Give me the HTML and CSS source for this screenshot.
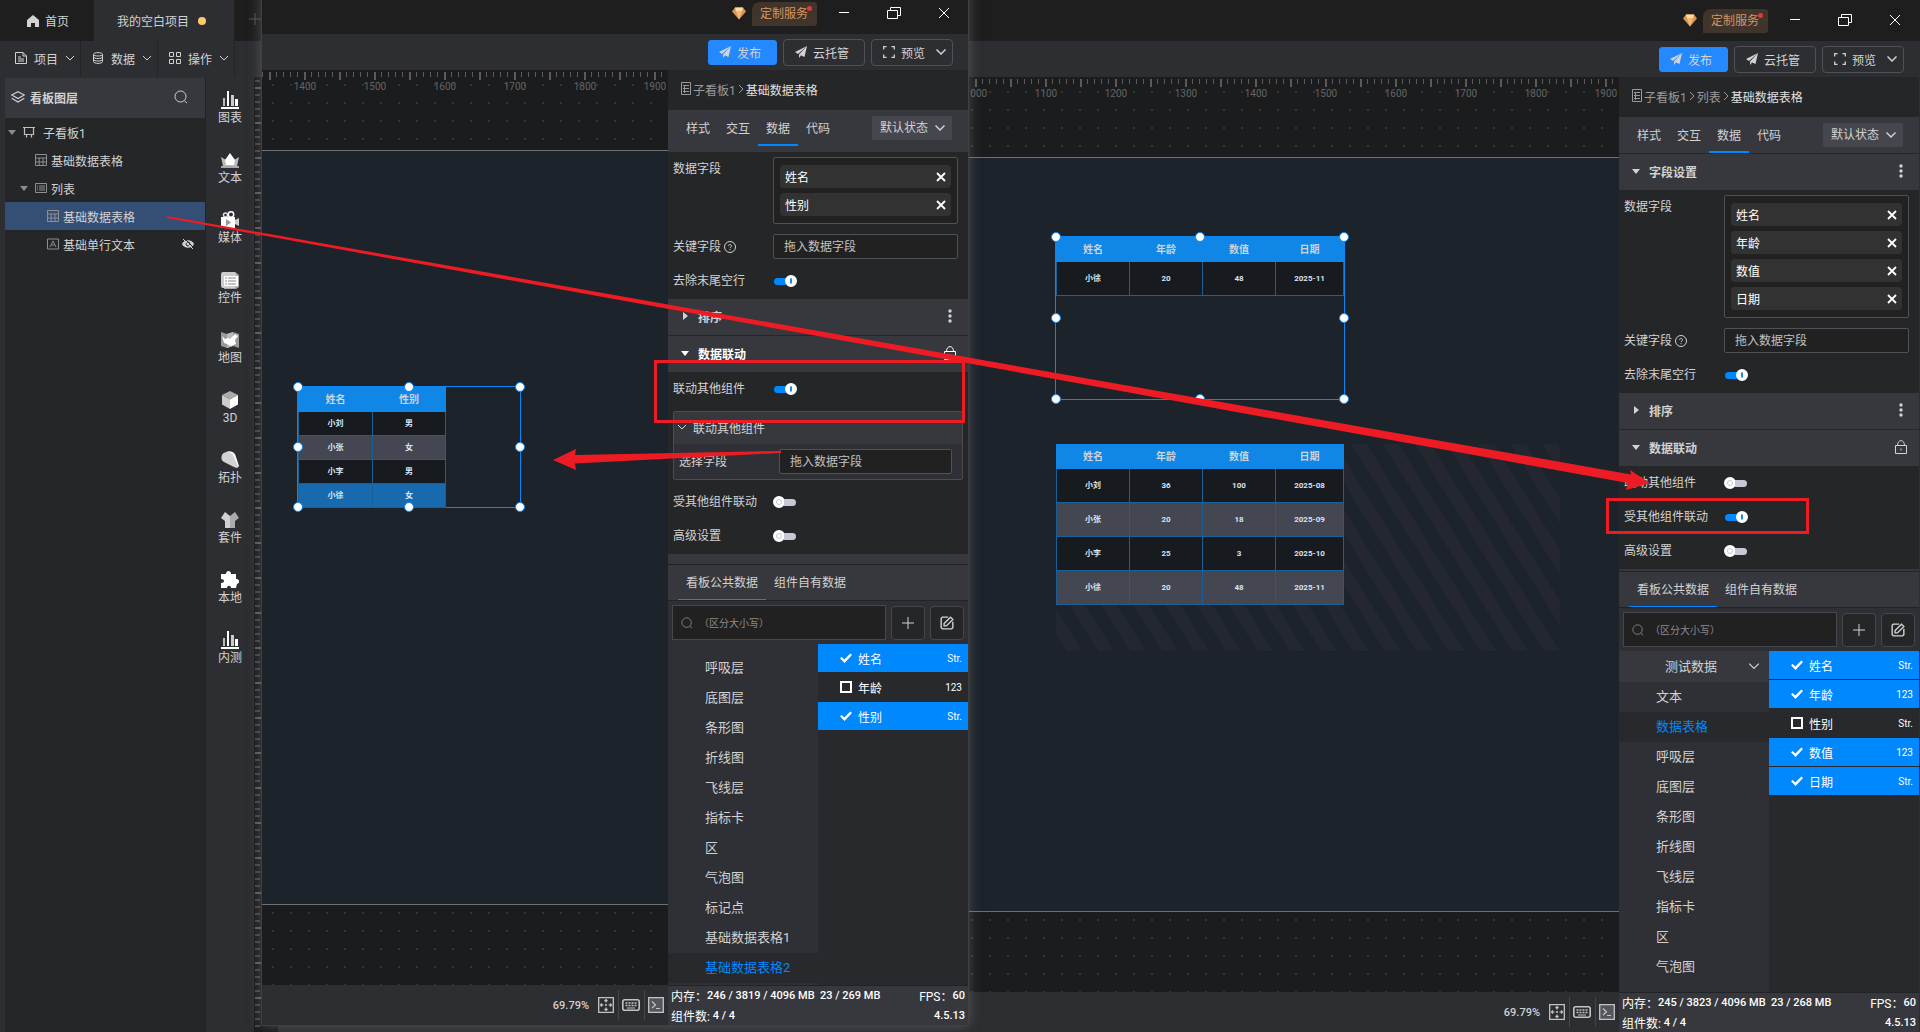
FILE: index.html
```html
<!DOCTYPE html>
<html lang="zh-CN">
<head>
  <meta charset="UTF-8" />
  <meta name="viewport" content="width=device-width, initial-scale=1.0" />
  <title>我的空白项目</title>
  <link rel="stylesheet" href="styles.css">
</head>
<body>

<!-- Iconos -->
<svg class="sprite" aria-hidden="true">
  <symbol id="i-home" viewBox="0 0 12 12"><path d="M6 0 12 5v7H8V8H4v4H0V5z" fill="currentColor"/></symbol>
  <symbol id="i-file" viewBox="0 0 12 12"><path d="M.5.5h7.500L11.500 4v7.500H.5zM8 .5V4h3.500M3 5h3M3 7h6M3 9h6" fill="none" stroke="currentColor"/></symbol>
  <symbol id="i-db" viewBox="0 0 12 12"><path d="M1.500 2.500c0-2.500 9-2.500 9 0v7c0 2.500-9 2.500-9 0zM1.500 2.500c0 2 9 2 9 0M1.500 5c0 2 9 2 9 0M1.500 7.500c0 2 9 2 9 0" fill="none" stroke="currentColor"/></symbol>
  <symbol id="i-grid" viewBox="0 0 12 12"><path d="M.5.5h4v4h-4zM7.500.5h4v4h-4zM.5 7.500h4v4h-4zM7.500 7.500h4v4h-4z" fill="none" stroke="currentColor"/></symbol>
  <symbol id="i-chev" viewBox="0 0 10 10"><path d="M1 3l4 4 4-4" fill="none" stroke="currentColor"/></symbol>
  <symbol id="i-chev2" viewBox="0 0 10 10"><path d="M.5 2.500 5 7l4.500-4.500" fill="none" stroke="currentColor" stroke-width="1.500"/></symbol>
  <symbol id="i-right" viewBox="0 0 6 10"><path d="M1 1l4 4-4 4" fill="none" stroke="currentColor"/></symbol>
  <symbol id="i-down" viewBox="0 0 8 8"><path d="M0 2h8L4 7z" fill="currentColor"/></symbol>
  <symbol id="i-next" viewBox="0 0 8 8"><path d="M2 0v8l5-4z" fill="currentColor"/></symbol>
  <symbol id="i-layers" viewBox="0 0 14 12"><path d="M7 .7 13.300 4 7 7.500.7 4zM.7 7.300 7 11l6.300-3.700" fill="none" stroke="currentColor" stroke-width="1.200"/></symbol>
  <symbol id="i-search" viewBox="0 0 14 14"><circle cx="6.500" cy="6.500" r="5.500" fill="none" stroke="currentColor"/><path d="M10.500 11l2.500 2" stroke="currentColor"/></symbol>
  <symbol id="i-board" viewBox="0 0 16 12"><path d="M0 1.500h12M1.500 1.500v7h9v-7M3.500 8.500v3M8.500 8.500v3" fill="none" stroke="currentColor" stroke-width="1.200"/></symbol>
  <symbol id="i-table" viewBox="0 0 12 12"><path d="M.5.5h11v11H.5zM.5 4h11M.5 8h11M4.200 4v7.500M8 4v7.500" fill="none" stroke="currentColor"/></symbol>
  <symbol id="i-list" viewBox="0 0 12 12"><path d="M.5 1.500h11v9H.5zM2 4h1M2 6h1M2 8h1M4 4h6M4 6h6M4 8h6" fill="none" stroke="currentColor"/></symbol>
  <symbol id="i-text" viewBox="0 0 12 12"><path d="M.5 1h11v10H.5zM3 9l3-6 3 6M4.500 7h3" fill="none" stroke="currentColor"/></symbol>
  <symbol id="i-eye" viewBox="0 0 12 12"><path d="M0 6c2-5 10-5 12 0-2 5-10 5-12 0z" fill="currentColor"/><circle cx="6" cy="6" r="2" fill="none" stroke="#252628"/><path d="M2 0l10 10" stroke="#252628"/><path d="M1 1l10 10" stroke="currentColor"/></symbol>
  <symbol id="i-chart" viewBox="0 0 18 18"><path d="M0 16h18v2H0z" fill="#fff"/><path d="M2 7h2v8H2z" fill="#bbb"/><path d="M6 0h2v15H6z" fill="#fff"/><path d="M10 4h3v11h-3z" fill="#ccc"/><path d="M14 8h3v7h-3z" fill="#fff"/></symbol>
  <symbol id="i-crown" viewBox="0 0 18 18"><path d="M0 6l5 3 4-6 4 6 5-3-2 9H2z" fill="#bbb"/><path d="M4 9l5-7 5 7-1 5H5z" fill="#fff"/><path d="M0 15h18v2H0z" fill="#aaa"/></symbol>
  <symbol id="i-media" viewBox="0 0 18 18"><circle cx="4.500" cy="4" r="2" fill="none" stroke="#ddd" stroke-width="1.500"/><circle cx="10" cy="3.500" r="2.700" fill="none" stroke="#fff" stroke-width="1.500"/><path d="M0 6h14v11H0z" fill="#fff"/><path d="M14 9l4-2v8l-4-2z" fill="#ccc"/><path d="M5 8l5 3.500L5 15z" fill="#999"/></symbol>
  <symbol id="i-widget" viewBox="0 0 18 18"><path d="M3 1h11l4 3v12l-3 2H3z" fill="#aaa"/><rect x="0" y="1" width="15" height="16" rx="2" fill="#ccc"/><path d="M3 5h14v10H3z" fill="#fff"/><path d="M4 7h2M4 10h2M4 13h2M7 7h8M7 10h8M7 13h8" stroke="#888"/></symbol>
  <symbol id="i-map" viewBox="0 0 18 18"><path d="M0 1l6 2 6-2 6 2v14l-6-2-6 2-6-2z" fill="#999"/><path d="M6 3l6-2v14l-6 2z" fill="#bbb"/><path d="M1 5l3 3 3-1 2 1 5-5 3 2-3 4 1 4-5 2-4-2-3-1z" fill="#fff"/></symbol>
  <symbol id="i-cube" viewBox="0 0 18 18"><path d="M9 0l8 4-8 4.500L1 4z" fill="#aaa"/><path d="M1 4l8 4.500V18l-8-4.500z" fill="#ccc"/><path d="M17 4 9 8.500V18l8-4.500z" fill="#fff"/></symbol>
  <symbol id="i-topo" viewBox="0 0 18 18"><path d="M5 1c5-2 9 0 10 5l3 9-2 2-4-6z" fill="#fff"/><path d="M1 4C4-1 11 1 13 6l4 9c0 2-2 2-4 1L3 11C0 9 0 7 1 4z" fill="#d2d2d2"/></symbol>
  <symbol id="i-shirt" viewBox="0 0 18 18"><path d="M9 5 4 1 0 7l4 3v7h5z" fill="#d0d0d0"/><path d="M9 5l5-4 4 6-4 3v7H9z" fill="#aaa"/></symbol>
  <symbol id="i-puzzle" viewBox="0 0 18 18"><path d="M0 3h5c0-4 5-4 5 0h5v5c4 0 4 4 1 5l-1 4h-5c0-3-4-3-4 0H0v-5c4 0 4-4 0-4z" fill="#fff"/></symbol>
  <symbol id="i-gem" viewBox="0 0 14 12"><path d="M3 0h8l3 4-7 8-7-8z" fill="#d9954f"/><path d="M3 0h8l-1 4H4z" fill="#ffd9a0"/><path d="M4 4h6l-3 8z" fill="#f3b877"/></symbol>
  <symbol id="i-send" viewBox="0 0 12 12"><path d="M12 0 0 6l3 2zM12 0 4 8.500 9.500 11zM4 8.500V12l2-2.500z" fill="currentColor"/></symbol>
  <symbol id="i-frame" viewBox="0 0 12 12"><path d="M.7 3.500V.7h2.800M8.500.7h2.800v2.800M11.300 8.500v2.800H8.500M3.500 11.300H.7V8.500" fill="none" stroke="currentColor" stroke-width="1.300"/></symbol>
  <symbol id="i-min" viewBox="0 0 14 14"><path d="M2 6.500h10" stroke="currentColor"/></symbol>
  <symbol id="i-restore" viewBox="0 0 14 14"><path d="M.5 4.500h10v8H.5zM3.500 4.500v-3h10v8h-3" fill="none" stroke="currentColor"/></symbol>
  <symbol id="i-close" viewBox="0 0 14 14"><path d="M2 2l10 10M12 2 2 12" stroke="currentColor"/></symbol>
  <symbol id="i-page" viewBox="0 0 10 14"><path d="M.5.5h9v12h-9zM2 3.500h1M4 3.500h4M2 6.500h1M4 6.500h4M2 9.500h1M4 9.500h4M3.500 3v8" fill="none" stroke="currentColor"/></symbol>
  <symbol id="i-x" viewBox="0 0 10 10"><path d="M1 1l8 8M9 1 1 9" stroke="currentColor" stroke-width="1.800"/></symbol>
  <symbol id="i-help" viewBox="0 0 12 12"><circle cx="6" cy="6" r="5.500" fill="none" stroke="currentColor"/><path d="M4.500 5c0-2 3-2 3 0 0 1-1.500 1-1.500 2.200M6 8.200v1" fill="none" stroke="currentColor"/></symbol>
  <symbol id="i-dots" viewBox="0 0 4 14"><circle cx="2" cy="2" r="1.700" fill="currentColor"/><circle cx="2" cy="7" r="1.700" fill="currentColor"/><circle cx="2" cy="12" r="1.700" fill="currentColor"/></symbol>
  <symbol id="i-lock" viewBox="0 0 12 14"><path d="M.5 5.500h11v8H.5zM2.500 5.500C2.500-1 9.500-1 9.500 5.500M6 8.500v2" fill="none" stroke="currentColor"/></symbol>
  <symbol id="i-plus" viewBox="0 0 12 12"><path d="M6 0v12M0 6h12" stroke="currentColor"/></symbol>
  <symbol id="i-edit" viewBox="0 0 12 12"><path d="M7 1H2L1 2v8l1 1h8l1-1V5M3.500 8.500V6.500L9 1l2 2-5.500 5.500z" fill="none" stroke="currentColor" stroke-width="1.200"/></symbol>
  <symbol id="i-fit" viewBox="0 0 16 16"><path d="M.7.7h14.600v14.600H.7z" fill="none" stroke="currentColor" stroke-width="1.300"/><path d="M8 2.500v3M8 10.500v3M2.500 8h3M10.500 8h3M6.500 4 8 2.500 9.500 4M6.500 12 8 13.500 9.500 12M4 6.500 2.500 8 4 9.500M12 6.500 13.500 8 12 9.500M7 8h2M8 7v2" fill="none" stroke="currentColor" stroke-width="1.200"/></symbol>
  <symbol id="i-keys" viewBox="0 0 18 12"><rect x=".8" y=".8" width="16.400" height="10.400" rx="2" fill="none" stroke="currentColor" stroke-width="1.600"/><path d="M3.500 4h11M3.500 6.500h11" stroke="currentColor" stroke-width="1.500" stroke-dasharray="2 1"/><path d="M5 9h8" stroke="currentColor"/></symbol>
  <symbol id="i-term" viewBox="0 0 16 16"><path d="M.7.7h14.600v14.600H.7z" fill="#55565c" stroke="currentColor" stroke-width="1.300"/><path d="M4 4.500 7.500 8 4 11M8 11.500h4" fill="none" stroke="currentColor" stroke-width="1.200"/></symbol>
</svg>

<!-- Ventana principal -->
<div class="window window-main">
  <header class="titlebar">
    <nav class="project-tabs">
      <a class="project-tab home" href="#"><svg class="ic12"><use href="#i-home"/></svg>首页</a>
      <a class="project-tab active" href="#">我的空白项目<i class="unsaved"></i></a>
      <button class="add-tab" aria-label="新建"><svg class="ic12"><use href="#i-plus"/></svg></button>
    </nav>
    <div class="service"><svg class="gem"><use href="#i-gem"/></svg><a class="service-link" href="#">定制服务</a></div>
    <div class="win-controls">
      <button aria-label="最小化"><svg class="ic14"><use href="#i-min"/></svg></button>
      <button aria-label="还原"><svg class="ic14"><use href="#i-restore"/></svg></button>
      <button aria-label="关闭"><svg class="ic14"><use href="#i-close"/></svg></button>
    </div>
  </header>

  <div class="toolbar">
    <div class="menus">
      <button class="menu"><svg class="ic12"><use href="#i-file"/></svg>项目<svg class="ic10"><use href="#i-chev"/></svg></button>
      <button class="menu"><svg class="ic12"><use href="#i-db"/></svg>数据<svg class="ic10"><use href="#i-chev"/></svg></button>
      <button class="menu"><svg class="ic12"><use href="#i-grid"/></svg>操作<svg class="ic10"><use href="#i-chev"/></svg></button>
    </div>
    <div class="actions">
      <button class="btn primary"><svg class="ic12"><use href="#i-send"/></svg>发布</button>
      <button class="btn"><svg class="ic12"><use href="#i-send"/></svg>云托管</button>
      <button class="btn"><svg class="ic12"><use href="#i-frame"/></svg>预览<svg class="ic10 push"><use href="#i-chev2"/></svg></button>
    </div>
  </div>

  <div class="workspace">
    <aside class="layers">
      <div class="layers-head"><svg class="ic14"><use href="#i-layers"/></svg><h2>看板图层</h2><svg class="ic14 push"><use href="#i-search"/></svg></div>
      <ul class="tree">
        <li class="lv1"><svg class="ic8"><use href="#i-down"/></svg><svg class="board"><use href="#i-board"/></svg>子看板1</li>
        <li class="lv2"><i class="ic8"></i><svg class="ic12"><use href="#i-table"/></svg>基础数据表格</li>
        <li class="lv2"><svg class="ic8"><use href="#i-down"/></svg><svg class="ic12"><use href="#i-list"/></svg>列表</li>
        <li class="lv3 selected"><i class="ic8"></i><svg class="ic12"><use href="#i-table"/></svg>基础数据表格</li>
        <li class="lv3"><i class="ic8"></i><svg class="ic12"><use href="#i-text"/></svg>基础单行文本<svg class="ic12 push eye"><use href="#i-eye"/></svg></li>
      </ul>
    </aside>

    <nav class="widgets">
      <button><svg><use href="#i-chart"/></svg>图表</button>
      <button><svg><use href="#i-crown"/></svg>文本</button>
      <button><svg><use href="#i-media"/></svg>媒体</button>
      <button><svg><use href="#i-widget"/></svg>控件</button>
      <button><svg><use href="#i-map"/></svg>地图</button>
      <button><svg><use href="#i-cube"/></svg>3D</button>
      <button><svg><use href="#i-topo"/></svg>拓扑</button>
      <button><svg><use href="#i-shirt"/></svg>套件</button>
      <button><svg><use href="#i-puzzle"/></svg>本地</button>
      <button><svg><use href="#i-chart"/></svg>内测</button>
    </nav>

    <div class="ruler-v"></div>

    <main class="editor">
      <div class="stage">
        <div class="ruler-h"><span>1000</span><span>1100</span><span>1200</span><span>1300</span><span>1400</span><span>1500</span><span>1600</span><span>1700</span><span>1800</span><span>1900</span></div>
        <div class="artboard">
          <div class="selection sel-detail">
            <table class="sheet">
              <thead><tr><th>姓名</th><th>年龄</th><th>数值</th><th>日期</th></tr></thead>
              <tbody><tr><td>小徐</td><td>20</td><td>48</td><td>2025-11</td></tr></tbody>
            </table>
            <i class="h nw"></i><i class="h n"></i><i class="h ne"></i><i class="h w"></i><i class="h e"></i><i class="h sw"></i><i class="h s"></i><i class="h se"></i>
          </div>
          <div class="list-area">
            <table class="sheet">
              <thead><tr><th>姓名</th><th>年龄</th><th>数值</th><th>日期</th></tr></thead>
              <tbody>
                <tr><td>小刘</td><td>36</td><td>100</td><td>2025-08</td></tr>
                <tr><td>小张</td><td>20</td><td>18</td><td>2025-09</td></tr>
                <tr><td>小李</td><td>25</td><td>3</td><td>2025-10</td></tr>
                <tr><td>小徐</td><td>20</td><td>48</td><td>2025-11</td></tr>
              </tbody>
            </table>
          </div>
        </div>
      </div>
      <div class="statusbar">
        <span>69.79%</span>
        <button aria-label="适应"><svg class="ic16"><use href="#i-fit"/></svg></button>
        <button aria-label="快捷键"><svg class="keys"><use href="#i-keys"/></svg></button>
        <button aria-label="控制台"><svg class="ic16"><use href="#i-term"/></svg></button>
      </div>
    </main>

    <aside class="panel">
      <nav class="crumbs"><svg class="page"><use href="#i-page"/></svg><a href="#">子看板1</a><svg class="sep"><use href="#i-right"/></svg><a href="#">列表</a><svg class="sep"><use href="#i-right"/></svg><span>基础数据表格</span></nav>
      <div class="tabs">
        <button>样式</button><button>交互</button><button class="on">数据</button><button>代码</button>
        <div class="state"><select aria-label="状态"><option>默认状态</option></select><svg class="ic10"><use href="#i-chev2"/></svg></div>
      </div>
      <div class="props">
        <h3 class="section"><svg class="ic8"><use href="#i-down"/></svg>字段设置<svg class="dots push"><use href="#i-dots"/></svg></h3>
        <div class="prop top">
          <span class="prop-label">数据字段</span>
          <ul class="chips">
            <li>姓名<button aria-label="删除"><svg class="ic10"><use href="#i-x"/></svg></button></li>
            <li>年龄<button aria-label="删除"><svg class="ic10"><use href="#i-x"/></svg></button></li>
            <li>数值<button aria-label="删除"><svg class="ic10"><use href="#i-x"/></svg></button></li>
            <li>日期<button aria-label="删除"><svg class="ic10"><use href="#i-x"/></svg></button></li>
          </ul>
        </div>
        <div class="prop"><label class="prop-label" for="m-key">关键字段<svg class="ic12"><use href="#i-help"/></svg></label><input type="text" class="field" id="m-key" placeholder="拖入数据字段"></div>
        <div class="prop switch-row"><label class="prop-label" for="m-trim">去除末尾空行</label><input type="checkbox" class="switch" id="m-trim" checked></div>
        <h3 class="section"><svg class="ic8"><use href="#i-next"/></svg>排序<svg class="dots push"><use href="#i-dots"/></svg></h3>
        <h3 class="section"><svg class="ic8"><use href="#i-down"/></svg>数据联动<svg class="lock push"><use href="#i-lock"/></svg></h3>
        <div class="prop switch-row"><label class="prop-label" for="m-link">联动其他组件</label><input type="checkbox" class="switch" id="m-link"></div>
        <div class="prop switch-row"><label class="prop-label" for="m-linked">受其他组件联动</label><input type="checkbox" class="switch" id="m-linked" checked></div>
        <div class="prop switch-row"><label class="prop-label" for="m-adv">高级设置</label><input type="checkbox" class="switch" id="m-adv"></div>
        <div class="section"></div>
      </div>
      <section class="data">
        <div class="data-tabs"><button class="on">看板公共数据</button><button>组件自有数据</button></div>
        <div class="data-search">
          <label class="search"><svg class="ic12"><use href="#i-search"/></svg><input type="text" aria-label="搜索" placeholder="（区分大小写）"></label>
          <button aria-label="添加"><svg class="ic12"><use href="#i-plus"/></svg></button>
          <button aria-label="编辑"><svg class="ic14"><use href="#i-edit"/></svg></button>
        </div>
        <div class="data-lists">
          <ul class="sources">
            <li class="group">测试数据<svg class="ic12 push"><use href="#i-chev"/></svg></li>
            <li>文本</li><li class="current">数据表格</li><li>呼吸层</li><li>底图层</li><li>条形图</li><li>折线图</li><li>飞线层</li><li>指标卡</li><li>区</li><li>气泡图</li>
          </ul>
          <div class="columns">
            <label><input type="checkbox" checked>姓名<em>Str.</em></label>
            <label><input type="checkbox" checked>年龄<em>123</em></label>
            <label><input type="checkbox">性别<em>Str.</em></label>
            <label><input type="checkbox" checked>数值<em>123</em></label>
            <label><input type="checkbox" checked>日期<em>Str.</em></label>
          </div>
        </div>
      </section>
      <footer class="info">
        <div><span>内存：</span><b>245 / 3823 / 4096 MB&nbsp; 23 / 268 MB</b><span class="push">FPS：</span><b>60</b></div>
        <div><span>组件数:</span><b>&nbsp;4 / 4</b><b class="push">4.5.13</b></div>
      </footer>
    </aside>
  </div>
</div>

<!-- Segunda ventana, encima de la principal -->
<div class="window window-front">
  <header class="titlebar">
    <div class="service"><svg class="gem"><use href="#i-gem"/></svg><a class="service-link" href="#">定制服务</a></div>
    <div class="win-controls">
      <button aria-label="最小化"><svg class="ic14"><use href="#i-min"/></svg></button>
      <button aria-label="还原"><svg class="ic14"><use href="#i-restore"/></svg></button>
      <button aria-label="关闭"><svg class="ic14"><use href="#i-close"/></svg></button>
    </div>
  </header>

  <div class="toolbar">
    <div class="actions">
      <button class="btn primary"><svg class="ic12"><use href="#i-send"/></svg>发布</button>
      <button class="btn"><svg class="ic12"><use href="#i-send"/></svg>云托管</button>
      <button class="btn"><svg class="ic12"><use href="#i-frame"/></svg>预览<svg class="ic10 push"><use href="#i-chev2"/></svg></button>
    </div>
  </div>

  <div class="workspace">
    <main class="editor">
      <div class="stage">
        <div class="ruler-h"><span>1400</span><span>1500</span><span>1600</span><span>1700</span><span>1800</span><span>1900</span></div>
        <div class="artboard">
          <div class="selection sel-names">
            <table class="sheet small">
              <thead><tr><th>姓名</th><th>性别</th></tr></thead>
              <tbody>
                <tr><td>小刘</td><td>男</td></tr>
                <tr><td>小张</td><td>女</td></tr>
                <tr><td>小李</td><td>男</td></tr>
                <tr class="picked"><td>小徐</td><td>女</td></tr>
              </tbody>
            </table>
            <i class="h nw"></i><i class="h n"></i><i class="h ne"></i><i class="h w"></i><i class="h e"></i><i class="h sw"></i><i class="h s"></i><i class="h se"></i>
          </div>
        </div>
      </div>
      <div class="statusbar">
        <span>69.79%</span>
        <button aria-label="适应"><svg class="ic16"><use href="#i-fit"/></svg></button>
        <button aria-label="快捷键"><svg class="keys"><use href="#i-keys"/></svg></button>
        <button aria-label="控制台"><svg class="ic16"><use href="#i-term"/></svg></button>
      </div>
    </main>

    <aside class="panel">
      <nav class="crumbs"><svg class="page"><use href="#i-page"/></svg><a href="#">子看板1</a><svg class="sep"><use href="#i-right"/></svg><span>基础数据表格</span></nav>
      <div class="tabs tall">
        <button>样式</button><button>交互</button><button class="on">数据</button><button>代码</button>
        <div class="state"><select aria-label="状态"><option>默认状态</option></select><svg class="ic10"><use href="#i-chev2"/></svg></div>
      </div>
      <div class="props">
        <div class="prop top">
          <span class="prop-label">数据字段</span>
          <ul class="chips">
            <li>姓名<button aria-label="删除"><svg class="ic10"><use href="#i-x"/></svg></button></li>
            <li>性别<button aria-label="删除"><svg class="ic10"><use href="#i-x"/></svg></button></li>
          </ul>
        </div>
        <div class="prop"><label class="prop-label" for="f-key">关键字段<svg class="ic12"><use href="#i-help"/></svg></label><input type="text" class="field" id="f-key" placeholder="拖入数据字段"></div>
        <div class="prop switch-row"><label class="prop-label" for="f-trim">去除末尾空行</label><input type="checkbox" class="switch" id="f-trim" checked></div>
        <h3 class="section"><svg class="ic8"><use href="#i-next"/></svg>排序<svg class="dots push"><use href="#i-dots"/></svg></h3>
        <h3 class="section bright"><svg class="ic8"><use href="#i-down"/></svg>数据联动<svg class="lock push"><use href="#i-lock"/></svg></h3>
        <div class="prop switch-row"><label class="prop-label" for="f-link">联动其他组件</label><input type="checkbox" class="switch" id="f-link" checked></div>
        <div class="link-box">
          <h4><svg class="ic10"><use href="#i-chev"/></svg>联动其他组件</h4>
          <div class="prop"><label class="prop-label" for="f-field">选择字段</label><input type="text" class="field" id="f-field" placeholder="拖入数据字段"></div>
        </div>
        <div class="prop switch-row"><label class="prop-label" for="f-linked">受其他组件联动</label><input type="checkbox" class="switch" id="f-linked"></div>
        <div class="prop switch-row"><label class="prop-label" for="f-adv">高级设置</label><input type="checkbox" class="switch" id="f-adv"></div>
        <div class="section"></div>
      </div>
      <section class="data">
        <div class="data-tabs"><button class="on">看板公共数据</button><button>组件自有数据</button></div>
        <div class="data-search">
          <label class="search"><svg class="ic12"><use href="#i-search"/></svg><input type="text" aria-label="搜索" placeholder="（区分大小写）"></label>
          <button aria-label="添加"><svg class="ic12"><use href="#i-plus"/></svg></button>
          <button aria-label="编辑"><svg class="ic14"><use href="#i-edit"/></svg></button>
        </div>
        <div class="data-lists">
          <ul class="sources scrolled">
            <li>呼吸层</li><li>底图层</li><li>条形图</li><li>折线图</li><li>飞线层</li><li>指标卡</li><li>区</li><li>气泡图</li><li>标记点</li><li>基础数据表格1</li><li class="current">基础数据表格2</li>
          </ul>
          <div class="columns">
            <label><input type="checkbox" checked>姓名<em>Str.</em></label>
            <label><input type="checkbox">年龄<em>123</em></label>
            <label><input type="checkbox" checked>性别<em>Str.</em></label>
          </div>
        </div>
      </section>
      <footer class="info">
        <div><span>内存：</span><b>246 / 3819 / 4096 MB&nbsp; 23 / 269 MB</b><span class="push">FPS：</span><b>60</b></div>
        <div><span>组件数:</span><b>&nbsp;4 / 4</b><b class="push">4.5.13</b></div>
      </footer>
    </aside>
  </div>
</div>

<!-- Flechas y recuadros rojos -->
<svg class="marks" viewBox="0 0 1920 1032" preserveAspectRatio="none" aria-hidden="true">
  <path d="M167 216 1631 474.500 1630 470 1650 483 1626 490 1628 483 167 218z" fill="#ed1c24"/>
  <path d="M781 451 575 455 576 449 553 460 576 470 575 463.500 781 453z" fill="#ed1c24"/>
  <rect x="655.500" y="361.500" width="308" height="60" fill="none" stroke="#ed1c24" stroke-width="3"/>
  <rect x="1607.500" y="499.500" width="200" height="33" fill="none" stroke="#ed1c24" stroke-width="3"/>
</svg>

</body>
</html>
```
FILE: styles.css
```css
*,
*::before,
*::after {
  box-sizing: border-box;
}

html, body {
  margin: 0;
  height: 100%;
  overflow: hidden;
  background: #1e1e1e;
  color: #d2d2d2;
  font-family: Roboto, 'Noto Sans CJK SC', sans-serif;
  font-size: 12px;
}

body {
  position: relative;
}

ul, h2, h3, h4 {
  margin: 0;
  padding: 0;
  list-style: none;
  font-size: 12px;
}

button, input, select {
  font: inherit;
  color: inherit;
  background: none;
  border: 0;
  padding: 0;
  margin: 0;
}

a {
  color: inherit;
  text-decoration: none;
}

svg, i {
  flex: none;
}

.sprite {
  position: absolute;
  width: 0;
  height: 0;
}

.ic8 { width: 8px; height: 8px; }
.ic10 { width: 10px; height: 10px; }
.ic12 { width: 12px; height: 12px; }
.ic14 { width: 14px; height: 14px; }
.ic16 { width: 16px; height: 16px; }
.push { margin-left: auto; }

/* Ventanas */
.window {
  display: flex;
  flex-direction: column;
  height: 100%;
  background: #2d2e32;
}

.window-front {
  position: absolute;
  top: -7px;
  left: 262px;
  width: 706px;
  box-shadow: 0 0 0 1px #3e4041, 0 0 12px rgba(140, 140, 140, 0.5);
}

.titlebar {
  flex: none;
  display: flex;
  align-items: center;
  justify-content: flex-end;
  height: 41px;
  background: #1e1e1e;
}

.window-main .titlebar,
.window-main .workspace,
.window-main .toolbar {
  padding-right: 1px;
}

.project-tabs {
  display: flex;
  align-self: stretch;
  margin-right: auto;
}

.project-tab {
  display: flex;
  align-items: center;
  gap: 6px;
  padding: 0 25px 0 27px;
}

.project-tab.active {
  width: 140px;
  padding: 0 23px;
  gap: 9px;
  background: #2d2e32;
}

.unsaved {
  width: 8px;
  height: 8px;
  border-radius: 50%;
  background: #ffc96b;
}

.add-tab {
  padding: 0 15px;
  color: #555;
}

.service {
  display: flex;
  align-items: center;
  gap: 6px;
  margin-right: 2px;
}

.gem {
  width: 14px;
  height: 13px;
}

.service-link {
  position: relative;
  padding: 0 9px 0 8px;
  line-height: 24px;
  color: #d29765;
  background: #40342b;
  border-radius: 8px 3px 3px 0;
}

.service-link::after {
  content: '';
  position: absolute;
  top: 4px;
  right: 5px;
  width: 5px;
  height: 5px;
  border-radius: 50%;
  background: #e03a3a;
}

.win-controls {
  display: flex;
  margin-right: -1px;
}

.win-controls button {
  display: flex;
  align-items: center;
  justify-content: center;
  width: 50px;
  height: 38px;
  padding-bottom: 2px;
  color: #fff;
}

/* Barra de herramientas */
.toolbar {
  flex: none;
  display: flex;
  align-items: center;
  height: 36px;
  background: #2d2e32;
}

.menus {
  display: flex;
  align-self: stretch;
  padding-left: 4px;
}

.menu {
  display: flex;
  align-items: center;
  gap: 7px;
  width: 77px;
  padding: 0 0 2px 11px;
  border-right: 1px solid #232426;
}

.actions {
  display: flex;
  align-items: center;
  gap: 6px;
  margin-left: auto;
  padding-right: 15px;
}

.btn {
  display: flex;
  align-items: center;
  gap: 6px;
  width: 82px;
  height: 27px;
  padding: 0 6px 0 11px;
  border: 1px solid #505156;
  border-radius: 4px;
}

.btn.primary {
  width: 69px;
  height: 25px;
  padding-left: 10px;
  background: #2489ff;
  border-color: #2489ff;
  border-radius: 3px;
}

.workspace {
  flex: 1;
  display: flex;
  min-height: 0;
}

/* Capas */
.layers {
  flex: none;
  width: 201px;
  margin: 1px 0 0 5px;
  background: #252628;
  border-right: 1px solid #222324;
}

.layers-head {
  display: flex;
  align-items: center;
  gap: 5px;
  height: 40px;
  padding: 0 17px 2px 6px;
  background: #37383e;
}

.tree li {
  display: flex;
  align-items: center;
  height: 28px;
}

.tree svg,
.tree i {
  margin-right: 4px;
  color: #8f8f8f;
}

.tree .ic8 {
  margin-right: 7px;
  color: #8b8b8b;
}

.tree .lv1 { padding-left: 3px; }
.tree .lv2 { padding-left: 15px; }
.tree .lv3 { padding-left: 27px; }

.tree .eye {
  margin: 0 11px 0 auto;
  color: #d2d2d2;
}

.tree .board {
  width: 16px;
  height: 12px;
  color: #c0c0c0;
}

.tree .selected {
  background: #354e75;
}

.widgets {
  flex: none;
  display: flex;
  flex-direction: column;
  width: 48px;
  margin-top: 1px;
}

.widgets button {
  display: flex;
  flex-direction: column;
  align-items: center;
  height: 60px;
  padding-top: 13px;
  line-height: 18px;
}

.widgets svg {
  width: 18px;
  height: 18px;
}

/* Reglas */
.ruler-v {
  flex: none;
  width: 24px;
  background:
    repeating-linear-gradient(#0000 0 10px, #5a5a5a 10px 12px, #0000 12px 35px) 1px 0 / 7px 100% no-repeat,
    repeating-linear-gradient(#0000 0 3px, #454545 3px 5px, #0000 5px 7px) 1px 0 / 5px 100% no-repeat,
    #1b1c1e;
}

.ruler-h {
  position: absolute;
  top: 2px;
  left: 0;
  right: 0;
  display: flex;
  justify-content: flex-end;
  height: 24px;
  padding-top: 9px;
  overflow: hidden;
  color: #646464;
  font-size: 10px;
  line-height: 12px;
  background:
    repeating-linear-gradient(to left, #0000 0 12px, #5e5a5a 12px 14px, #0000 14px 35px) 0 0 / 100% 8px no-repeat,
    repeating-linear-gradient(to left, #0000 0 6px, #5e5a5a 6px 7px) 0 0 / 100% 5px no-repeat;
}

.ruler-h span {
  flex: none;
  width: 70px;
  text-align: center;
}

.ruler-h span:last-child {
  margin-right: -22px;
}

/* Lienzo */
.editor {
  flex: 1;
  display: flex;
  flex-direction: column;
  min-width: 0;
}

.stage {
  position: relative;
  flex: 1;
  display: flex;
  padding: 80px 0;
  background: conic-gradient(from 270deg at 2px 2px, #343537 90deg, #0000 90deg) right 14px / 18px 18px, #1b1c1e;
}

.artboard {
  position: relative;
  flex: 1;
  background: #1c232a;
  border: solid #6c7172;
  border-width: 1px 0;
}

.selection {
  position: absolute;
  border: 1px solid #0a86f5;
}

.sel-detail {
  left: 777px;
  top: 78px;
  width: 290px;
  height: 164px;
}

.sel-names {
  left: 35px;
  top: 235px;
  width: 224px;
  height: 122px;
}

.h {
  position: absolute;
  width: 10px;
  height: 10px;
  margin: -5px;
  border: 1px solid #0a86f5;
  border-radius: 50%;
  background: #fff;
}

.nw, .n, .ne { top: 0; }
.w, .e { top: 50%; }
.sw, .s, .se { top: 100%; }
.nw, .w, .sw { left: 0; }
.n, .s { left: 50%; }
.ne, .e, .se { left: 100%; }

.list-area {
  position: absolute;
  left: 778px;
  top: 286px;
  width: 504px;
  height: 207px;
  background: repeating-linear-gradient(58deg, #0000 0 9px, #24272f 9px 22px, #0000 22px 27px);
}

.sheet {
  width: 288px;
  table-layout: fixed;
  border-collapse: collapse;
  text-align: center;
  font-size: 8px;
  font-weight: bold;
  line-height: 12px;
  color: #d5e4f2;
}

.sheet th,
.sheet td {
  height: 34px;
  padding: 0;
  background: #171a1e;
  border: 1px solid #1c5f97;
}

.sheet th {
  height: 24px;
  font-size: 10px;
  color: #cdd3d8;
  background: #1087e6;
  border-color: #1087e6;
}

.sheet th:nth-child(-n+3) {
  width: 73px;
}

.sheet tr:nth-child(even) td {
  background: #444752;
}

.sheet.small {
  width: 148px;
}

.sheet.small td {
  height: 24px;
}

.sheet.small th:first-child {
  width: 74px;
}

.sheet tr.picked:nth-child(even) td {
  background: #176aad;
}

.statusbar {
  flex: none;
  display: flex;
  align-items: center;
  justify-content: flex-end;
  height: 40px;
  padding-right: 4px;
  font-size: 11px;
  font-weight: 500;
  background: #2d2e32;
}

.statusbar span {
  margin-right: 6px;
}

.statusbar button {
  display: flex;
  align-items: center;
  height: 30px;
  padding: 0 4px 0 3px;
  color: #c4c4c4;
}

.statusbar button + button {
  border-left: 1px solid #45464a;
}

.statusbar button:last-child {
  padding-right: 0;
}

.keys {
  width: 18px;
  height: 12px;
}

/* Panel derecho */
.panel {
  flex: none;
  display: flex;
  flex-direction: column;
  width: 300px;
  background: #252628;
}

.crumbs {
  flex: none;
  display: flex;
  align-items: center;
  gap: 2px;
  height: 40px;
  padding: 0 0 2px 13px;
  color: #9a9a9a;
}

.crumbs span {
  color: #e0e0e0;
}

.page {
  width: 10px;
  height: 14px;
}

.sep {
  width: 6px;
  height: 10px;
}

.tabs {
  flex: none;
  display: flex;
  align-items: flex-start;
  height: 36px;
  padding: 0 16px 0 10px;
  background: #37383e;
}

.tabs.tall {
  height: 42px;
}

.tabs button {
  width: 40px;
  height: 36px;
  padding-bottom: 2px;
}

.tabs .on {
  border-bottom: 2px solid #0088ff;
  padding-bottom: 0;
}

.state {
  display: grid;
  align-items: center;
  width: 80px;
  height: 24px;
  margin: 6px 0 0 auto;
  background: #45464e;
  border-radius: 2px;
}

.state select,
.state svg {
  grid-area: 1 / 1;
}

.state select {
  appearance: none;
  height: 24px;
  padding-left: 8px;
}

.state svg {
  justify-self: end;
  margin-right: 7px;
  pointer-events: none;
}

.props {
  flex: 1;
  min-height: 0;
  overflow: hidden;
}

.section {
  display: flex;
  align-items: center;
  gap: 9px;
  height: 37px;
  padding: 0 12px 2px 13px;
  background: #37383e;
  border-top: 1px solid #252628;
}

.bright {
  color: #fff;
}

.dots {
  width: 4px;
  height: 14px;
  margin-right: 4px;
}

.lock {
  width: 12px;
  height: 14px;
}

.prop {
  display: flex;
  align-items: center;
  padding: 5px 10px 5px 5px;
}

.prop.top {
  align-items: flex-start;
}

.switch-row {
  height: 34px;
}

.prop-label {
  flex: none;
  display: flex;
  align-items: center;
  gap: 3px;
  width: 100px;
  line-height: 24px;
}

.chips {
  flex: 1;
  display: flex;
  flex-direction: column;
  gap: 5px;
  padding: 7px 6px;
  border: 1px solid #505154;
  border-radius: 2px;
  background: #212121;
}

.chips li {
  display: flex;
  align-items: center;
  justify-content: space-between;
  height: 23px;
  padding: 0 5px;
  color: #fff;
  background: #323233;
  border-radius: 4px;
}

.chips button {
  display: flex;
}

.field {
  flex: 1;
  min-width: 0;
  height: 25px;
  padding: 0 10px;
  border: 1px solid #505154;
  border-radius: 2px;
  background: #212121;
}

.field::placeholder {
  color: #c2c2c2;
}

.switch {
  appearance: none;
  display: flex;
  align-items: center;
  width: 24px;
  height: 12px;
}

.switch::before {
  content: '';
  flex: none;
  width: 12px;
  height: 12px;
  border: 3px solid #fff;
  border-radius: 50%;
  background: #fff;
  box-shadow: inset 0 0 0 1px #c5c9d6;
}

.switch::after {
  content: '';
  flex: 1;
  height: 7px;
  margin-left: -1px;
  margin-right: 1px;
  border-radius: 0 4px 4px 0;
  background: #c5c9d6;
}

.switch:checked {
  flex-direction: row-reverse;
}

.switch:checked::before {
  border-width: 3px 5px;
  background: #0088ff;
  background-clip: padding-box;
  box-shadow: none;
}

.switch:checked::after {
  margin: 0 -1px 0 1px;
  border-radius: 4px 0 0 4px;
  background: #0088ff;
}

.link-box {
  margin: 5px;
  border: 1px solid #4b4c50;
  border-radius: 2px;
  background: #2f3035;
}

.link-box h4 {
  display: flex;
  align-items: center;
  gap: 6px;
  height: 32px;
  padding: 0 0 2px 3px;
  font-weight: normal;
  background: #37383e;
}

/* Datos */
.data {
  flex: none;
  display: flex;
  flex-direction: column;
  height: 421px;
  background: #2f3035;
}

.data-tabs {
  flex: none;
  display: flex;
  height: 37px;
  padding-left: 10px;
  background: #37383e;
  border: solid #222324;
  border-width: 1px 0;
}

.data-tabs button {
  padding: 0 8px 2px;
}

.data-tabs .on {
  border-bottom: 1px solid #0088ff;
  padding-bottom: 1px;
}

.data-search {
  flex: none;
  display: flex;
  align-items: center;
  gap: 5px;
  padding: 4px;
}

.search {
  flex: 1;
  display: flex;
  align-items: center;
  gap: 6px;
  height: 35px;
  padding-left: 8px;
  color: #8c8c8c;
  background: #212121;
  border: 1px solid #46474b;
}

.search input {
  flex: 1;
  min-width: 0;
  height: 33px;
  padding-top: 2px;
  font-size: 10px;
}

.search input::placeholder {
  color: #8c8c8c;
}

.data-search button {
  display: flex;
  align-items: center;
  justify-content: center;
  width: 34px;
  height: 34px;
  border: 1px solid #46474b;
  border-radius: 4px;
  background: #252628;
}

.data-lists {
  flex: 1;
  display: flex;
  min-height: 0;
}

.sources {
  flex: 1;
  overflow: hidden;
  font-size: 13px;
}

.sources.scrolled {
  padding-top: 9px;
}

.sources li {
  display: flex;
  align-items: center;
  height: 30px;
  padding: 0 0 3px 37px;
}

.sources .group {
  height: 31px;
  padding: 0 9px 2px 46px;
  background: #37383e;
}

.sources .current {
  color: #0088ff;
  background: #28292c;
}

.columns {
  flex: 1;
  background: #28292c;
}

.columns label {
  display: flex;
  align-items: center;
  gap: 6px;
  height: 28px;
  margin-bottom: 1px;
  padding: 0 6px 0 22px;
  color: #fff;
}

.columns label:has(:checked) {
  background: #0088ff;
}

.columns input {
  appearance: none;
  width: 12px;
  height: 12px;
  border: 2px solid #fff;
}

.columns input:checked {
  border: 0;
  background: #fff;
  clip-path: polygon(0 52%, 14% 42%, 36% 62%, 86% 12%, 100% 24%, 38% 92%);
}

.columns em {
  margin-left: auto;
  font-size: 10px;
  font-style: normal;
}

.info {
  flex: none;
  height: 40px;
  padding: 0 3px;
  color: #fff;
  background: #37383e;
  border-top: 1px solid #222324;
}

.info div {
  display: flex;
  align-items: center;
  height: 20px;
  padding-bottom: 2px;
}

.info b {
  font-size: 11px;
  font-weight: 500;
}

/* Anotaciones */
.marks {
  position: absolute;
  top: 0;
  left: 0;
  width: 100%;
  height: 100%;
  pointer-events: none;
}
```
